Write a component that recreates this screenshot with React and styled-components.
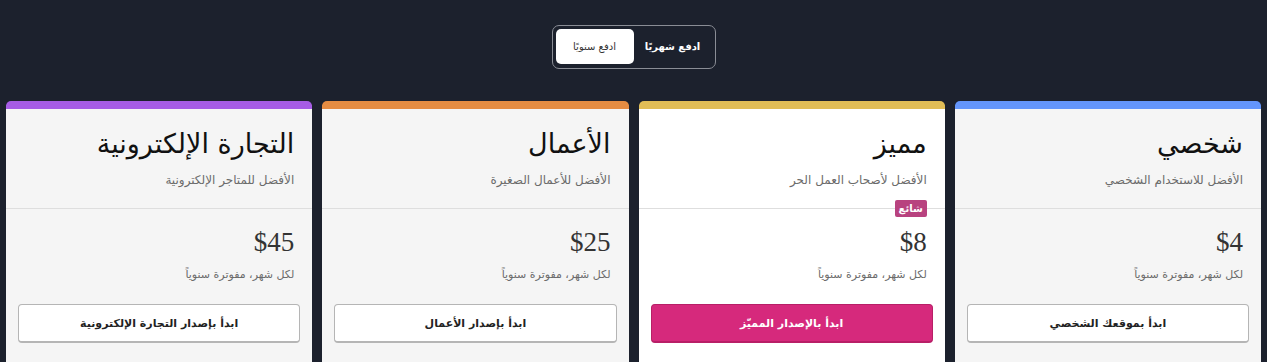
import React, { useState } from "react";
import styled, { createGlobalStyle } from "styled-components";

const GlobalStyle = createGlobalStyle`
  html, body {
    margin: 0;
    padding: 0;
    background: #1c212d;
  }
  body {
    font-family: "DejaVu Sans", "Liberation Sans", sans-serif;
    direction: rtl;
  }
`;

const Page = styled.div`
  min-height: 362px;
  background: #1c212d;
  padding: 25px 6px 0;
  box-sizing: border-box;
`;

const ToggleRow = styled.div`
  display: flex;
  justify-content: center;
  margin-bottom: 32px;
`;

const Toggle = styled.div`
  display: flex;
  padding: 3px;
  padding-bottom: 4px;
  border: 1px solid #8a8d95;
  border-radius: 7px;
`;

const ToggleButton = styled.button`
  width: 78px;
  height: 35px;
  border: none;
  border-radius: 5px;
  font-family: "DejaVu Sans", sans-serif;
  font-size: 10px;
  font-weight: ${(p) => (p.active ? "normal" : "bold")};
  background: ${(p) => (p.active ? "#ffffff" : "transparent")};
  color: ${(p) => (p.active ? "#333" : "#ffffff")};
  cursor: pointer;
  padding: 0;
`;

const Cards = styled.div`
  display: flex;
  gap: 10px;
`;

const Card = styled.div`
  flex: 1;
  background: ${(p) => (p.featured ? "#ffffff" : "#f5f5f5")};
  border-top: 8px solid ${(p) => p.accent};
  border-radius: 5px 5px 0 0;
  height: 300px;
`;

const Header = styled.div`
  padding: 15px 18px 19px;
  border-bottom: 1px solid #dedede;
`;

const Title = styled.h2`
  margin: 0;
  font-size: 27px;
  line-height: 40px;
  font-weight: normal;
  color: #111;
`;

const Subtitle = styled.p`
  margin: 7px 0 0;
  font-size: 12px;
  line-height: 18px;
  color: #6b6b6b;
`;

const Body = styled.div`
  position: relative;
  padding: 17px 12px 20px;
`;

const Badge = styled.span`
  position: absolute;
  top: -9px;
  right: 18px;
  background: #b8427f;
  color: #fff;
  font-size: 10px;
  font-weight: bold;
  line-height: 17px;
  padding: 0 4px;
  border-radius: 2px;
`;

const Price = styled.div`
  padding: 0 6px;
  font-family: "Liberation Serif", serif;
  font-size: 27px;
  line-height: 32px;
  color: #333;
`;

const Note = styled.div`
  padding: 0 6px;
  margin-top: 9px;
  font-size: 11px;
  line-height: 16px;
  color: #6b6b6b;
`;

const Action = styled.button`
  display: block;
  width: 100%;
  height: 39px;
  margin-top: 21px;
  border: 1px solid ${(p) => (p.primary ? "#b81f67" : "#b5b5b5")};
  border-bottom-width: 2px;
  border-radius: 4px;
  background: ${(p) => (p.primary ? "#d6297c" : "#ffffff")};
  color: ${(p) => (p.primary ? "#ffffff" : "#222")};
  font-family: "DejaVu Sans", sans-serif;
  font-size: 11px;
  font-weight: bold;
  cursor: pointer;
`;

const plans = [
  {
    title: "شخصي",
    subtitle: "الأفضل للاستخدام الشخصي",
    price: "$4",
    cta: "ابدأ بموقعك الشخصي",
    accent: "#6395fb",
  },
  {
    title: "مميز",
    subtitle: "الأفضل لأصحاب العمل الحر",
    price: "$8",
    cta: "ابدأ بالإصدار المميّز",
    accent: "#e1bd56",
    featured: true,
  },
  {
    title: "الأعمال",
    subtitle: "الأفضل للأعمال الصغيرة",
    price: "$25",
    cta: "ابدأ بإصدار الأعمال",
    accent: "#e58c42",
  },
  {
    title: "التجارة الإلكترونية",
    subtitle: "الأفضل للمتاجر الإلكترونية",
    price: "$45",
    cta: "ابدأ بإصدار التجارة الإلكترونية",
    accent: "#a65ce5",
  },
];

export default function App() {
  const [billing, setBilling] = useState("yearly");

  return (
    <Page>
      <GlobalStyle />
      <ToggleRow>
        <Toggle>
          <ToggleButton
            active={billing === "monthly"}
            onClick={() => setBilling("monthly")}
          >
            ادفع شهريًا
          </ToggleButton>
          <ToggleButton
            active={billing === "yearly"}
            onClick={() => setBilling("yearly")}
          >
            ادفع سنويًا
          </ToggleButton>
        </Toggle>
      </ToggleRow>
      <Cards>
        {plans.map((plan) => (
          <Card key={plan.title} accent={plan.accent} featured={plan.featured}>
            <Header>
              <Title>{plan.title}</Title>
              <Subtitle>{plan.subtitle}</Subtitle>
            </Header>
            <Body>
              {plan.featured && <Badge>شائع</Badge>}
              <Price>{plan.price}</Price>
              <Note>لكل شهر، مفوترة سنوياً</Note>
              <Action primary={plan.featured}>{plan.cta}</Action>
            </Body>
          </Card>
        ))}
      </Cards>
    </Page>
  );
}
